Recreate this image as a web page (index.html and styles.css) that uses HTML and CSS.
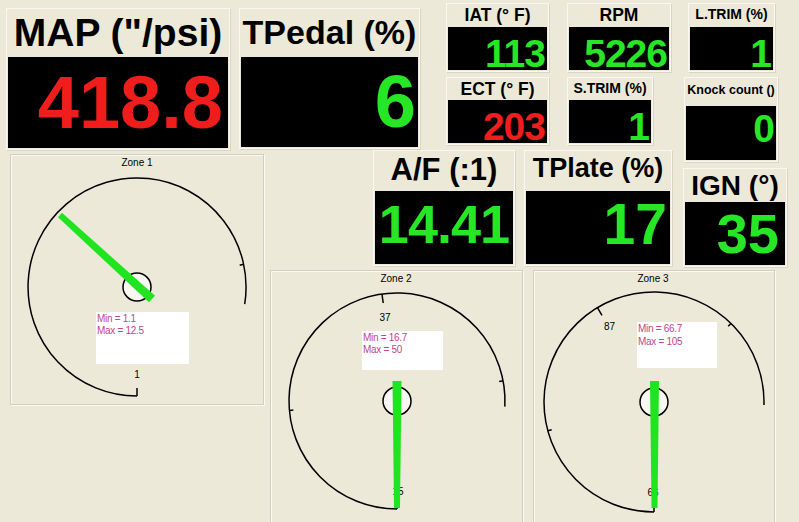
FILE: index.html
```html
<!DOCTYPE html>
<html lang="en">
<head>
  <meta charset="UTF-8" />
  <meta name="viewport" content="width=device-width, initial-scale=1.0"/>
  <title>Engine Monitor</title>
  <link rel="stylesheet" href="styles.css">
</head>
<body>
  <div class="dash">

    <div class="top">
      <div class="readout map">
        <div class="label">MAP ("/psi)</div>
        <div class="value red">418.8</div>
      </div>
      <div class="readout tpedal">
        <div class="label">TPedal (%)</div>
        <div class="value">6</div>
      </div>

      <div class="small-grid">
        <div class="col">
          <div class="readout small iat">
            <div class="label">IAT (° F)</div>
            <div class="value">113</div>
          </div>
          <div class="readout small ect">
            <div class="label">ECT (° F)</div>
            <div class="value red">203</div>
          </div>
        </div>
        <div class="col">
          <div class="readout small rpm">
            <div class="label">RPM</div>
            <div class="value">5226</div>
          </div>
          <div class="readout small strim">
            <div class="label">S.TRIM (%)</div>
            <div class="value">1</div>
          </div>
        </div>
        <div class="col">
          <div class="readout small ltrim">
            <div class="label">L.TRIM (%)</div>
            <div class="value">1</div>
          </div>
          <div class="readout small knock">
            <div class="label">Knock count ()</div>
            <div class="value">0</div>
          </div>
        </div>
      </div>
    </div>

    <div class="bottom">
      <div class="zone zone1">
        <svg class="gauge" width="252" height="249" viewBox="0 0 252 249">
          <text class="title" x="126" y="11">Zone 1</text>
          <path class="dial" d="M126 241 A109 109 0 1 1 233.7 149.1"/>
          <line class="tick" x1="126" y1="241" x2="126" y2="233"/>
          <line class="tick" x1="232.6" y1="109.3" x2="228.7" y2="110.2"/>
          <text class="mark" x="126" y="223">1</text>
          <rect class="info" x="85" y="157" width="93" height="52"/>
          <text class="minmax" x="86" y="167">Min = 1.1</text>
          <text class="minmax" x="86" y="179">Max = 12.5</text>
          <circle class="hub" cx="126" cy="132" r="14"/>
          <polygon class="needle" points="144,140.7 51,57.8 47,62.2 138,147.3"/>
        </svg>
      </div>

      <div class="right">
        <div class="mid-row">
          <div class="readout af">
            <div class="label">A/F (:1)</div>
            <div class="value">14.41</div>
          </div>
          <div class="readout tplate">
            <div class="label">TPlate (%)</div>
            <div class="value">17</div>
          </div>
          <div class="readout ign">
            <div class="label">IGN (°)</div>
            <div class="value">35</div>
          </div>
        </div>

        <div class="zones">
          <div class="zone zone2">
            <svg class="gauge" width="251" height="258" viewBox="0 0 251 258">
              <text class="title" x="125" y="11">Zone 2</text>
              <path class="dial" d="M126 238 A108 108 0 1 1 233.85 135.65"/>
              <line class="tick" x1="126" y1="238" x2="126" y2="230"/>
              <line class="tick" x1="111" y1="23.1" x2="112.2" y2="32"/>
              <line class="tick" x1="18.4" y1="139.4" x2="22.4" y2="139.1"/>
              <line class="tick" x1="232.1" y1="109.8" x2="228.2" y2="110.5"/>
              <text class="mark" x="114" y="50">37</text>
              <text class="mark" x="127" y="224">15</text>
              <rect class="info" x="91" y="60" width="81" height="39"/>
              <text class="minmax" x="92" y="70">Min = 16.7</text>
              <text class="minmax" x="92" y="82">Max = 50</text>
              <circle class="hub" cx="126" cy="130" r="14"/>
              <polygon class="needle" points="121.5,110 130.5,110 129,237 123,237"/>
            </svg>
          </div>
          <div class="zone zone3">
            <svg class="gauge" width="240" height="258" viewBox="0 0 240 258">
              <text class="title" x="119" y="11">Zone 3</text>
              <path class="dial" d="M120 241 A110 110 0 1 1 229.96 134.07"/>
              <line class="tick" x1="120" y1="241" x2="120" y2="233"/>
              <line class="tick" x1="63.4" y1="36.7" x2="68" y2="44.4"/>
              <line class="tick" x1="13.8" y1="159.8" x2="17.7" y2="158.8"/>
              <line class="tick" x1="197" y1="52.4" x2="194.2" y2="55.3"/>
              <text class="mark" x="75.5" y="59">87</text>
              <text class="mark" x="119" y="225">66</text>
              <rect class="info" x="103" y="51" width="80" height="46"/>
              <text class="minmax" x="104" y="61">Min = 66.7</text>
              <text class="minmax" x="104" y="74">Max = 105</text>
              <circle class="hub" cx="120" cy="131" r="14"/>
              <polygon class="needle" points="116,110 125,110 123.5,237 117.5,237"/>
            </svg>
          </div>
        </div>
      </div>
    </div>

  </div>
</body>
</html>
```

FILE: styles.css
```css
* {
  box-sizing: border-box;
}

body {
  margin: 0;
  width: 799px;
  height: 522px;
  overflow: hidden;
  background-color: #ece9d8;
  font-family: "Liberation Sans", Arial, sans-serif;
}

/* readout panels */
.readout {
  border: 1px solid #f9f8f2;
  padding: 0 1px 1px;
  box-shadow: 1px 1px 0 #d9d5c5;
}

.label {
  text-align: center;
  font-weight: bold;
  color: #000;
  white-space: nowrap;
}

.value {
  background-color: #000;
  color: #26e626;
  font-weight: bold;
  text-align: right;
  white-space: nowrap;
}

.value.red {
  color: #f01d1d;
}

.top {
  display: flex;
  align-items: flex-start;
  height: 150px;
  padding-left: 6px;
}

.map {
  width: 224px;
  margin-top: 8px;
}

.map .label {
  height: 48px;
  font-size: 39px;
  line-height: 47px;
}

.map .value {
  height: 91px;
  font-size: 74px;
  line-height: 91px;
  padding-right: 5px;
}

.tpedal {
  width: 181px;
  margin-top: 8px;
  margin-left: 9px;
}

.tpedal .label {
  height: 48px;
  font-size: 34px;
  line-height: 47px;
}

.tpedal .value {
  height: 90px;
  font-size: 74px;
  line-height: 90px;
  padding-right: 2px;
}

/* small readouts */
.small-grid {
  display: flex;
  margin-left: 26px;
  margin-top: 3px;
}

.col {
  display: flex;
  flex-direction: column;
  align-items: flex-start;
  gap: 5px;
}

.col + .col {
  margin-left: 18px;
}

.col:last-child {
  margin-left: 13px;
}

.small .label {
  height: 23px;
  font-size: 17.5px;
  line-height: 22px;
}

.small .value {
  height: 43px;
  padding-top: 10px;
  font-size: 39px;
  line-height: 33px;
  letter-spacing: -1px;
  padding-right: 2px;
}

.iat, .ect {
  width: 103px;
}

.ect .label,
.strim .label {
  height: 22px;
}

.rpm {
  width: 104px;
}

.strim {
  width: 86px;
}

.strim .label,
.ltrim .label {
  font-size: 14px;
  line-height: 21px;
}

.ltrim {
  width: 87px;
  margin-left: 4px;
}

.knock {
  width: 94px;
}

.knock .label {
  height: 28px;
  font-size: 12.5px;
  line-height: 25px;
}

.knock .value {
  height: 54px;
  padding-top: 0;
  line-height: 45px;
}

/* lower half */
.bottom {
  display: flex;
  align-items: flex-start;
  padding-left: 10px;
}

.right {
  margin-left: 6px;
}

.mid-row {
  display: flex;
  align-items: flex-start;
}

.af {
  width: 142px;
  margin-left: 103px;
}

.af .label,
.tplate .label {
  height: 40px;
  line-height: 37px;
}

.af .label {
  font-size: 31px;
}

.af .value,
.tplate .value {
  height: 73px;
  line-height: 66px;
}

.af .value {
  font-size: 54px;
  letter-spacing: -1px;
  padding-right: 4px;
}

.tplate {
  width: 148px;
  margin-left: 9px;
}

.tplate .label {
  font-size: 27px;
  line-height: 35px;
}

.tplate .value {
  font-size: 57px;
  padding-right: 3px;
}

.ign {
  width: 104px;
  margin-left: 11px;
  margin-top: 18px;
}

.ign .label {
  height: 33px;
  font-size: 28px;
  line-height: 33px;
}

.ign .value {
  height: 63px;
  font-size: 56px;
  line-height: 63px;
  padding-right: 6px;
}

/* gauges */
.zones {
  display: flex;
  margin-top: 3px;
}

.zone {
  border: 1px solid #d2cebe;
  box-shadow: inset 1px 1px 0 #fbfaf5, 1px 1px 0 #fbfaf5;
}

.zone1 {
  width: 254px;
  height: 251px;
  margin-top: 4px;
}

.zone2 {
  width: 253px;
  height: 260px;
}

.zone3 {
  width: 242px;
  height: 260px;
  margin-left: 10px;
}

.gauge {
  display: block;
}

.gauge text {
  font-family: "Liberation Sans", Arial, sans-serif;
  font-size: 10px;
  fill: #000;
}

.gauge .title,
.gauge .mark {
  text-anchor: middle;
}

.gauge .minmax {
  fill: #c8448a;
  letter-spacing: -0.3px;
}

.dial {
  fill: none;
  stroke: #000;
  stroke-width: 1.5;
}

.tick {
  stroke: #000;
  stroke-width: 1.5;
}

.info {
  fill: #fff;
}

.hub {
  fill: #f8f7f2;
  stroke: #000;
  stroke-width: 1.5;
}

.needle {
  fill: #21e421;
}
```
